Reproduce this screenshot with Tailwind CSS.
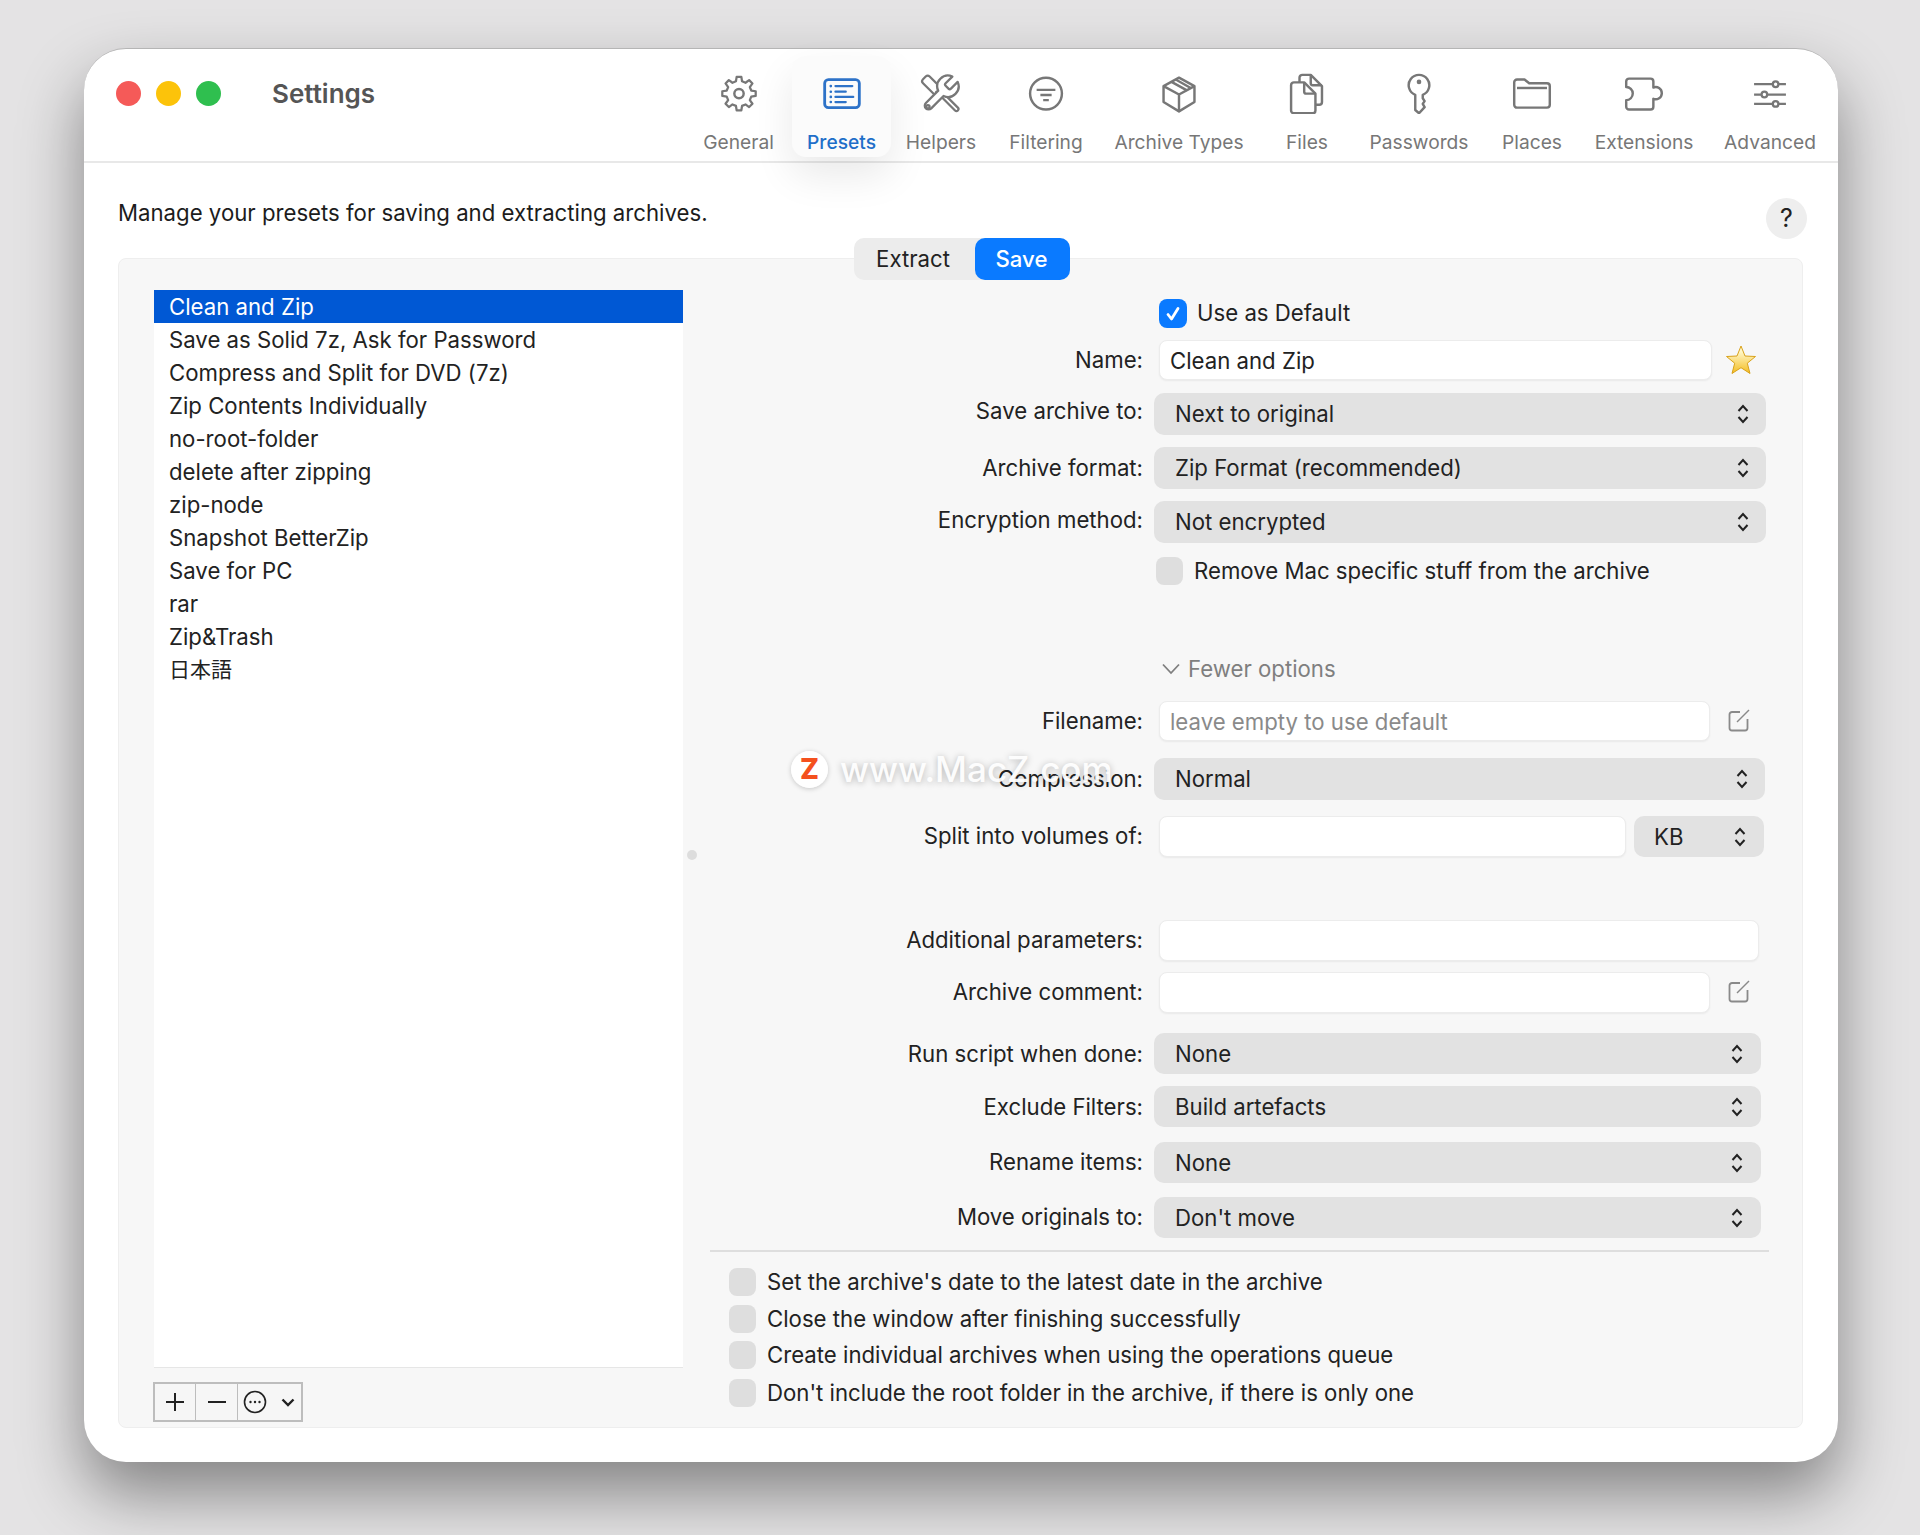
<!DOCTYPE html>
<html lang="en">
  <head>
    <meta charset="UTF-8" />
    <title>Settings</title>
    <script src="https://cdn.jsdelivr.net/npm/@tailwindcss/browser@4"></script>
  </head>
  <body>
    <div class="w-[1920px] h-[1535px] overflow-hidden bg-[#e4e3e4] pt-[48px] pl-[84px] font-['Inter','Noto_Sans_CJK_JP',sans-serif] text-[22.2px] text-[#222]">
      <!-- window -->
      <div class="relative w-[1754px] h-[1414px] bg-white rounded-[42px] border-t border-[#b5b5b5] shadow-[0_32px_64px_rgba(0,0,0,0.42)]">
        <!-- toolbar -->
        <div class="flex justify-between h-[114px] border-b-2 border-[#e8e8e8] pr-[3px]">
          <div class="flex items-center h-[89px] pl-[32px]">
            <div class="w-[25px] h-[25px] rounded-full bg-[#f55a58]"></div>
            <div class="w-[25px] h-[25px] rounded-full bg-[#fcc30a] ml-[15px]"></div>
            <div class="w-[25px] h-[25px] rounded-full bg-[#2fbf4f] ml-[15px]"></div>
            <div class="ml-[51px] mb-[1px] text-[26px] font-semibold text-[#555]">Settings</div>
          </div>
          <div class="flex text-[19.2px] text-[#777]">
            <div class="w-[107px] flex flex-col items-center mt-[7px] h-[101px]">
              <svg class="mt-[17px]" width="44" height="44" viewBox="0 0 44 44" fill="none" stroke="#777" stroke-width="2.400" stroke-linejoin="round"><polygon points="18.73,8.9 19.49,4.17 24.51,4.17 25.27,8.9 28.95,10.43 32.83,7.62 36.38,11.17 33.57,15.05 35.1,18.73 39.83,19.49 39.83,24.51 35.1,25.27 33.57,28.95 36.38,32.83 32.83,36.38 28.95,33.57 25.27,35.1 24.51,39.83 19.49,39.83 18.73,35.1 15.05,33.57 11.17,36.38 7.62,32.83 10.43,28.95 8.9,25.27 4.17,24.51 4.17,19.49 8.9,18.73 10.43,15.05 7.62,11.17 11.17,7.62 15.05,10.43" /><circle cx="22" cy="22" r="5" stroke-width="2.600" /></svg>
              <div class="mt-[14px] whitespace-nowrap">General</div>
            </div>
            <div class="w-[99px] flex flex-col items-center mt-[7px] h-[101px] rounded-[14px] bg-[#fbfbfb] shadow-[0_18px_40px_rgba(0,0,0,0.09)] text-[#1f6fc9]">
              <svg class="mt-[17px]" width="44" height="44" viewBox="0 0 44 44" fill="none" stroke="#2d72c8" stroke-width="2.400" stroke-linecap="round"><rect x="3.500" y="7" width="37" height="30" rx="4" stroke-width="3" /><path d="M15 14H33M15 20H26M15 25.500H34M15 31H26" /><path d="M10 14h.1M10 20h.1M10 25.500h.1M10 31h.1" stroke-width="2.800" /></svg>
              <div class="mt-[14px] whitespace-nowrap font-medium">Presets</div>
            </div>
            <div class="w-[100px] flex flex-col items-center mt-[7px] h-[101px]">
              <svg class="mt-[17px]" width="44" height="44" viewBox="0 0 44 44" fill="none" stroke="#777" stroke-width="2.400" stroke-linejoin="round" stroke-linecap="round"><rect x="-5" y="-11" width="10" height="22" rx="3" transform="translate(12 13) rotate(-45)" /><path d="M20 17L40 37a2.100 2.100 0 0 1-3 3L17 20" /><path fill="#fff" stroke-width="1.300" transform="translate(-1 -1) scale(1.9)" d="M14.700 6.300a1 1 0 0 0 0 1.400l1.600 1.600a1 1 0 0 0 1.400 0l3.770-3.770a6 6 0 0 1-7.940 7.940l-6.910 6.910a2.120 2.120 0 0 1-3-3l6.910-6.910a6 6 0 0 1 7.940-7.940l-3.760 3.760z" /><circle cx="8" cy="36" r="1.800" /></svg>
              <div class="mt-[14px] whitespace-nowrap">Helpers</div>
            </div>
            <div class="w-[110px] flex flex-col items-center mt-[7px] h-[101px]">
              <svg class="mt-[17px]" width="44" height="44" viewBox="0 0 44 44" fill="none" stroke="#777" stroke-width="2.600"><circle cx="22" cy="22" r="17" /><path d="M12 18H32M16 23.500H28M19 29H25" /></svg>
              <div class="mt-[14px] whitespace-nowrap">Filtering</div>
            </div>
            <div class="w-[156px] flex flex-col items-center mt-[7px] h-[101px]">
              <svg class="mt-[17px]" width="44" height="44" viewBox="0 0 44 44" fill="none" stroke="#777" stroke-width="2.600" stroke-linejoin="round"><path d="M22 5L38.500 14V31L22 41L5.500 31V14Z" /><path d="M5.500 14L22 23L38.500 14M22 23V41" /><path d="M14 9.500L30.500 18.500M18.500 7L34.500 16" /></svg>
              <div class="mt-[14px] whitespace-nowrap">Archive Types</div>
            </div>
            <div class="w-[100px] flex flex-col items-center mt-[7px] h-[101px]">
              <svg class="mt-[17px]" width="44" height="44" viewBox="0 0 44 44" fill="none" stroke="#777" stroke-width="2.600" stroke-linejoin="round"><path d="M8 10h11l12 12v18a3 3 0 0 1-3 3H8a3 3 0 0 1-3-3V13a3 3 0 0 1 3-3z" /><path d="M19 10v10a2 2 0 0 0 2 2h10" /><path d="M14 10V5a3 3 0 0 1 3-3h9l12 12v17a3 3 0 0 1-3 3h-4" /><path d="M26 2v9a2 2 0 0 0 2 2h10" /></svg>
              <div class="mt-[14px] whitespace-nowrap">Files</div>
            </div>
            <div class="w-[124px] flex flex-col items-center mt-[7px] h-[101px]">
              <svg class="mt-[17px]" width="44" height="44" viewBox="0 0 44 44" fill="none" stroke="#777" stroke-width="2.600" stroke-linejoin="round"><path d="M18 23.250A11 11 0 1 1 26 23.250V27L28 30L26 33L28 36.500L22 43L18 39.500Z" /><circle cx="22" cy="9.500" r="2.500" fill="#777" stroke="none" /></svg>
              <div class="mt-[14px] whitespace-nowrap">Passwords</div>
            </div>
            <div class="w-[102px] flex flex-col items-center mt-[7px] h-[101px]">
              <svg class="mt-[17px]" width="44" height="44" viewBox="0 0 44 44" fill="none" stroke="#777" stroke-width="2.600" stroke-linejoin="round"><path d="M3 10a3 3 0 0 1 3-3h8l5 4h19a3 3 0 0 1 3 3v20a3 3 0 0 1-3 3H6a3 3 0 0 1-3-3z" /><path d="M6 16H38" /></svg>
              <div class="mt-[14px] whitespace-nowrap">Places</div>
            </div>
            <div class="w-[122px] flex flex-col items-center mt-[7px] h-[101px]">
              <svg class="mt-[17px]" width="44" height="44" viewBox="0 0 44 44" fill="none" stroke="#777" stroke-width="2.600" stroke-linejoin="round"><path d="M6 6H29a3 3 0 0 1 3 3V15.500a6.500 6.500 0 1 1 0 12V36a3 3 0 0 1-3 3H6a3 3 0 0 1-3-3V29a7 7 0 1 0 0-14V9a3 3 0 0 1 3-3Z" /></svg>
              <div class="mt-[14px] whitespace-nowrap">Extensions</div>
            </div>
            <div class="w-[130px] flex flex-col items-center mt-[7px] h-[101px]">
              <svg class="mt-[17px]" width="44" height="44" viewBox="0 0 44 44" fill="none" stroke="#777" stroke-width="2.400"><path d="M5 12H39M5 23H39M5 33H39" /><circle cx="28" cy="12" r="3" fill="#fff" /><circle cx="16" cy="23" r="3" fill="#fff" /><circle cx="28" cy="33" r="3" fill="#fff" /></svg>
              <div class="mt-[14px] whitespace-nowrap">Advanced</div>
            </div>
          </div>
        </div>

        <!-- description row -->
        <div class="flex justify-between items-start pl-[34px] pr-[31px] h-[95px]">
          <div class="mt-[33px] text-[#1c1c1c] whitespace-nowrap">Manage your presets for saving and extracting archives.</div>
          <div class="mt-[35px] w-[41px] h-[41px] rounded-full bg-[#eeeeee] flex items-center justify-center text-[25px]">?</div>
        </div>

        <!-- panel -->
        <div class="relative ml-[34px] w-[1685px] h-[1170px] bg-[#f7f7f7] border border-[#eeeeee] rounded-[8px] flex pl-[35px] pt-[31px]">
          <div class="absolute left-[735px] top-[-21px] flex h-[42px] w-[216px] rounded-[10px] bg-[#ececec] leading-[42px]">
            <div class="w-[121px] text-center pr-[3px]">Extract</div>
            <div class="w-[95px] text-center pr-[2px] bg-[#0a7aff] text-white rounded-[10px] font-medium">Save</div>
          </div>
          <div class="absolute left-[568px] top-[591px] w-[10px] h-[10px] rounded-full bg-[#dddddd]"></div>

          <!-- presets list -->
          <div class="w-[529px]">
            <div class="h-[1078px] bg-white border-b border-[#e6e6e6] leading-[33px]">
              <div class="h-[33px] pl-[15px] bg-[#0058d4] text-white">Clean and Zip</div>
              <div class="h-[33px] pl-[15px]">Save as Solid 7z, Ask for Password</div>
              <div class="h-[33px] pl-[15px]">Compress and Split for DVD (7z)</div>
              <div class="h-[33px] pl-[15px]">Zip Contents Individually</div>
              <div class="h-[33px] pl-[15px]">no-root-folder</div>
              <div class="h-[33px] pl-[15px]">delete after zipping</div>
              <div class="h-[33px] pl-[15px]">zip-node</div>
              <div class="h-[33px] pl-[15px]">Snapshot BetterZip</div>
              <div class="h-[33px] pl-[15px]">Save for PC</div>
              <div class="h-[33px] pl-[15px]">rar</div>
              <div class="h-[33px] pl-[15px]">Zip&amp;Trash</div>
              <div class="h-[33px] pl-[15px] text-[21px]">日本語</div>
            </div>
            <div class="mt-[14px] -ml-px flex h-[40px] w-[150px] border-2 border-[#bdbdbd] bg-[#f6f6f6]">
              <div class="w-[41px] border-r border-[#bdbdbd] flex items-center justify-center">
                <svg width="22" height="22" viewBox="0 0 22 22" stroke="#222" stroke-width="2"><path d="M11 2V20M2 11H20" /></svg>
              </div>
              <div class="w-[42px] border-r border-[#bdbdbd] flex items-center justify-center">
                <svg width="22" height="22" viewBox="0 0 22 22" stroke="#222" stroke-width="2"><path d="M2 11H20" /></svg>
              </div>
              <div class="flex-1 flex items-center justify-between pl-[5px] pr-[6px]">
                <svg width="24" height="24" viewBox="0 0 24 24" fill="none" stroke="#222" stroke-width="1.600"><circle cx="12" cy="12" r="10.500" /><circle cx="7.500" cy="12" r="1.200" fill="#222" stroke="none" /><circle cx="12" cy="12" r="1.200" fill="#222" stroke="none" /><circle cx="16.500" cy="12" r="1.200" fill="#222" stroke="none" /></svg>
                <svg width="14" height="9" viewBox="0 0 14 9" fill="none" stroke="#222" stroke-width="2.400"><path d="M1.500 1.500L7 7L12.500 1.500" /></svg>
              </div>
            </div>
          </div>

          <!-- preset form -->
          <div class="ml-[27px] w-[1059px] mt-[9px]">
            <div class="flex items-center h-[29px] pl-[449px]">
              <div class="w-[28px] h-[29px] rounded-[8px] bg-[#0a7aff] flex items-center justify-center">
                <svg width="20" height="20" viewBox="0 0 20 20" fill="none" stroke="#fff" stroke-width="2.800" stroke-linecap="round" stroke-linejoin="round"><path d="M5 10.500L8.500 15L15 4.500" /></svg>
              </div>
              <div class="ml-[10px] mb-[1px]">Use as Default</div>
            </div>
            <div class="flex items-center mt-[12px] h-[40px]">
              <div class="w-[433px] text-right">Name:</div>
              <input class="ml-[16px] w-[553px] h-[40px] pl-[10px] bg-white rounded-[8px] border border-[#ececec] shadow-[0_1px_2px_rgba(0,0,0,0.06)]" value="Clean and Zip" />
              <svg class="ml-[13px] mb-[1px]" width="32" height="32" viewBox="0 0 32 32" stroke="#d9a21b" stroke-width="1"><defs><linearGradient id="star" x1="0" y1="0" x2="0" y2="1"><stop offset="0.200" stop-color="#fff7c8" /><stop offset="1" stop-color="#f4bd22" /></linearGradient></defs><path fill="url(#star)" stroke-linejoin="round" d="M16 2L20 12L30.500 12.500L22.300 19.200L25 29.500L16 23.700L7 29.500L9.700 19.200L1.500 12.500L12 12Z" /></svg>
            </div>
            <div class="flex items-center mt-[13px] h-[42px]">
              <div class="w-[433px] text-right mb-[6px]">Save archive to:</div>
              <div class="ml-[11px] w-[612px] h-[42px] pl-[21px] pr-[16px] bg-[#e2e2e2] rounded-[10px] flex items-center justify-between">
                <span>Next to original</span>
                <svg width="14" height="22" viewBox="0 0 14 22" fill="none" stroke="#222" stroke-width="2"><path d="M2.500 8L7 3L11.500 8M2.500 14L7 19L11.500 14" /></svg>
              </div>
            </div>
            <div class="flex items-center mt-[12px] h-[42px]">
              <div class="w-[433px] text-right">Archive format:</div>
              <div class="ml-[11px] w-[612px] h-[42px] pl-[21px] pr-[16px] bg-[#e2e2e2] rounded-[10px] flex items-center justify-between">
                <span>Zip Format (recommended)</span>
                <svg width="14" height="22" viewBox="0 0 14 22" fill="none" stroke="#222" stroke-width="2"><path d="M2.500 8L7 3L11.500 8M2.500 14L7 19L11.500 14" /></svg>
              </div>
            </div>
            <div class="flex items-center mt-[12px] h-[42px]">
              <div class="w-[433px] text-right mb-[4px]">Encryption method:</div>
              <div class="ml-[11px] w-[612px] h-[42px] pl-[21px] pr-[16px] bg-[#e2e2e2] rounded-[10px] flex items-center justify-between">
                <span>Not encrypted</span>
                <svg width="14" height="22" viewBox="0 0 14 22" fill="none" stroke="#222" stroke-width="2"><path d="M2.500 8L7 3L11.500 8M2.500 14L7 19L11.500 14" /></svg>
              </div>
            </div>
            <div class="flex items-center mt-[14px] h-[28px] pl-[446px]">
              <div class="w-[27px] h-[28px] rounded-[8px] bg-[#dedede]"></div>
              <div class="ml-[11px]">Remove Mac specific stuff from the archive</div>
            </div>
            <div class="flex items-center mt-[70px] h-[28px] pl-[452px] text-[#7f7f7f]">
              <svg width="18" height="12" viewBox="0 0 18 12" fill="none" stroke="#7f7f7f" stroke-width="1.800"><path d="M1 1.500L9 10L17 1.500" /></svg>
              <div class="ml-[8px]">Fewer options</div>
            </div>
            <div class="flex items-center mt-[18px] h-[40px]">
              <div class="w-[433px] text-right">Filename:</div>
              <input class="ml-[16px] w-[551px] h-[40px] pl-[10px] bg-white rounded-[8px] border border-[#ececec] shadow-[0_1px_2px_rgba(0,0,0,0.06)] placeholder:text-[#8a8a8a]" placeholder="leave empty to use default" />
              <svg class="ml-[17px] mb-[3px]" width="24" height="24" viewBox="0 0 24 24" fill="none" stroke="#8a8a8a" stroke-width="1.800"><path d="M13 4H5a2.500 2.500 0 0 0-2.500 2.500V20A2.500 2.500 0 0 0 5 22.500H18a2.500 2.500 0 0 0 2.500-2.500V11" /><path d="M10 14L22 2" stroke-width="1.400" /></svg>
            </div>
            <div class="flex items-center mt-[17px] h-[42px]">
              <div class="w-[433px] text-right">Compression:</div>
              <div class="ml-[11px] w-[611px] h-[42px] pl-[21px] pr-[16px] bg-[#e2e2e2] rounded-[10px] flex items-center justify-between">
                <span>Normal</span>
                <svg width="14" height="22" viewBox="0 0 14 22" fill="none" stroke="#222" stroke-width="2"><path d="M2.500 8L7 3L11.500 8M2.500 14L7 19L11.500 14" /></svg>
              </div>
            </div>
            <div class="flex items-center mt-[16px] h-[41px]">
              <div class="w-[433px] text-right mb-[2px]">Split into volumes of:</div>
              <input class="ml-[16px] w-[467px] h-[41px] bg-white rounded-[8px] border border-[#ececec] shadow-[0_1px_2px_rgba(0,0,0,0.06)]" />
              <div class="ml-[8px] w-[130px] h-[41px] pl-[20px] pr-[17px] bg-[#e2e2e2] rounded-[10px] flex items-center justify-between">
                <span>KB</span>
                <svg width="14" height="22" viewBox="0 0 14 22" fill="none" stroke="#222" stroke-width="2"><path d="M2.500 8L7 3L11.500 8M2.500 14L7 19L11.500 14" /></svg>
              </div>
            </div>
            <div class="flex items-center mt-[63px] h-[41px]">
              <div class="w-[433px] text-right mb-[2px]">Additional parameters:</div>
              <input class="ml-[16px] w-[600px] h-[41px] bg-white rounded-[8px] border border-[#ececec] shadow-[0_1px_2px_rgba(0,0,0,0.06)]" />
            </div>
            <div class="flex items-center mt-[11px] h-[41px]">
              <div class="w-[433px] text-right mb-[1px]">Archive comment:</div>
              <input class="ml-[16px] w-[551px] h-[41px] bg-white rounded-[8px] border border-[#ececec] shadow-[0_1px_2px_rgba(0,0,0,0.06)]" />
              <svg class="ml-[17px] mb-[3px]" width="24" height="24" viewBox="0 0 24 24" fill="none" stroke="#8a8a8a" stroke-width="1.800"><path d="M13 4H5a2.500 2.500 0 0 0-2.500 2.500V20A2.500 2.500 0 0 0 5 22.500H18a2.500 2.500 0 0 0 2.500-2.500V11" /><path d="M10 14L22 2" stroke-width="1.400" /></svg>
            </div>
            <div class="flex items-center mt-[20px] h-[41px]">
              <div class="w-[433px] text-right">Run script when done:</div>
              <div class="ml-[11px] w-[607px] h-[41px] pl-[21px] pr-[17px] bg-[#e2e2e2] rounded-[10px] flex items-center justify-between">
                <span>None</span>
                <svg width="14" height="22" viewBox="0 0 14 22" fill="none" stroke="#222" stroke-width="2"><path d="M2.500 8L7 3L11.500 8M2.500 14L7 19L11.500 14" /></svg>
              </div>
            </div>
            <div class="flex items-center mt-[12px] h-[41px]">
              <div class="w-[433px] text-right">Exclude Filters:</div>
              <div class="ml-[11px] w-[607px] h-[41px] pl-[21px] pr-[17px] bg-[#e2e2e2] rounded-[10px] flex items-center justify-between">
                <span>Build artefacts</span>
                <svg width="14" height="22" viewBox="0 0 14 22" fill="none" stroke="#222" stroke-width="2"><path d="M2.500 8L7 3L11.500 8M2.500 14L7 19L11.500 14" /></svg>
              </div>
            </div>
            <div class="flex items-center mt-[15px] h-[41px]">
              <div class="w-[433px] text-right mb-[2px]">Rename items:</div>
              <div class="ml-[11px] w-[607px] h-[41px] pl-[21px] pr-[17px] bg-[#e2e2e2] rounded-[10px] flex items-center justify-between">
                <span>None</span>
                <svg width="14" height="22" viewBox="0 0 14 22" fill="none" stroke="#222" stroke-width="2"><path d="M2.500 8L7 3L11.500 8M2.500 14L7 19L11.500 14" /></svg>
              </div>
            </div>
            <div class="flex items-center mt-[14px] h-[41px]">
              <div class="w-[433px] text-right mb-[2px]">Move originals to:</div>
              <div class="ml-[11px] w-[607px] h-[41px] pl-[21px] pr-[17px] bg-[#e2e2e2] rounded-[10px] flex items-center justify-between">
                <span>Don't move</span>
                <svg width="14" height="22" viewBox="0 0 14 22" fill="none" stroke="#222" stroke-width="2"><path d="M2.500 8L7 3L11.500 8M2.500 14L7 19L11.500 14" /></svg>
              </div>
            </div>
            <div class="mt-[12px] h-[2px] bg-[#dedede]"></div>
            <div class="flex items-center mt-[16px] h-[28px] pl-[19px]">
              <div class="w-[27px] h-[28px] rounded-[8px] bg-[#dedede]"></div>
              <div class="ml-[11px]">Set the archive's date to the latest date in the archive</div>
            </div>
            <div class="flex items-center mt-[9px] h-[28px] pl-[19px]">
              <div class="w-[27px] h-[28px] rounded-[8px] bg-[#dedede]"></div>
              <div class="ml-[11px]">Close the window after finishing successfully</div>
            </div>
            <div class="flex items-center mt-[8px] h-[28px] pl-[19px]">
              <div class="w-[27px] h-[28px] rounded-[8px] bg-[#dedede]"></div>
              <div class="ml-[11px]">Create individual archives when using the operations queue</div>
            </div>
            <div class="flex items-center mt-[10px] h-[28px] pl-[19px]">
              <div class="w-[27px] h-[28px] rounded-[8px] bg-[#dedede]"></div>
              <div class="ml-[11px]">Don't include the root folder in the archive, if there is only one</div>
            </div>
          </div>
        </div>

        <!-- watermark -->
        <div class="absolute left-[707px] top-[700px] flex items-center h-[40px] text-white/95 text-[35px] font-medium [text-shadow:0_1px_7px_rgba(0,0,0,0.28)]">
          <div class="w-[37px] h-[37px] rounded-full bg-white/95 shadow-[0_1px_5px_rgba(0,0,0,0.2)] flex items-center justify-center text-[#f4511e] text-[28px] font-extrabold [text-shadow:none]">Z</div>
          <div class="ml-[12px] whitespace-nowrap">www.MacZ.com</div>
        </div>
      </div>
    </div>
  </body>
</html>
